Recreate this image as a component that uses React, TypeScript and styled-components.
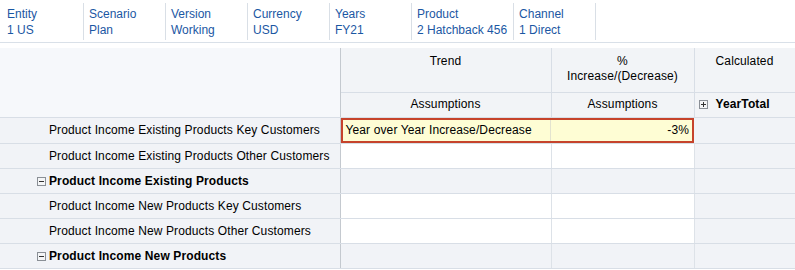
import React from 'react';
import styled, { createGlobalStyle } from 'styled-components';

const GlobalStyle = createGlobalStyle`
  html, body {
    margin: 0;
    padding: 0;
    background: #fff;
    font-family: "Liberation Sans", Arial, sans-serif;
  }
`;

const Page = styled.div`
  width: 795px;
  height: 270px;
  overflow: hidden;
  background: #fff;
`;

const PovBar = styled.div`
  display: flex;
  height: 43px;
  border-bottom: 1px solid #d9e0e8;
  box-sizing: border-box;
  padding: 3px 0 0 2px;
`;

const PovItem = styled.div`
  min-width: 82px;
  box-sizing: border-box;
  padding: 3px 6px 0 5px;
  border-right: 1px solid #d9dfe6;
  color: #1b57a3;
  font-size: 12px;
  line-height: 16px;
  white-space: nowrap;
  height: 37px;
`;

const Grid = styled.table`
  margin-top: 5px;
  width: 795px;
  border-collapse: collapse;
  table-layout: fixed;
  font-size: 12px;
  letter-spacing: 0.12px;
  color: #000;
`;

const Corner = styled.th`
  background: #f6f8fb;
  border-right: 1px solid #c4c9cf;
  border-bottom: 1px solid #d8dee6;
`;

const HeadCell = styled.th<{ $tall?: boolean }>`
  background: #f2f4f7;
  font-weight: normal;
  text-align: center;
  vertical-align: ${p => (p.$tall ? 'top' : 'middle')};
  height: ${p => (p.$tall ? '44px' : '25px')};
  padding: ${p => (p.$tall ? '6px 4px 0' : '0 4px')};
  line-height: 15px;
  border-right: 1px solid #d8dee6;
  border-bottom: 1px solid #d8dee6;
  box-sizing: border-box;
`;

const TotalHead = styled(HeadCell)`
  text-align: left;
  font-weight: bold;
  padding-left: 4px;
`;

const Label = styled.td<{ $bold?: boolean }>`
  background: #f1f3f7;
  height: 24px;
  padding: 0 0 0 ${p => (p.$bold ? '37px' : '49px')};
  font-weight: ${p => (p.$bold ? 'bold' : 'normal')};
  border-right: 1px solid #c4c9cf;
  border-bottom: 1px solid #d8dee6;
  white-space: nowrap;
`;

const Cell = styled.td<{ $shade?: boolean }>`
  background: ${p => (p.$shade ? '#f1f3f7' : '#fff')};
  height: 24px;
  padding: 0 4px;
  border-right: 1px solid #dde2e8;
  border-bottom: 1px solid #d8dee6;
`;

const Toggle = styled.span`
  display: inline-block;
  width: 9px;
  height: 9px;
  box-sizing: border-box;
  border: 1px solid #8a8f96;
  background: #f4f5f7;
  position: relative;
  margin-right: 3px;
  vertical-align: -1px;

  &::before {
    content: '';
    position: absolute;
    left: 1px;
    right: 1px;
    top: 3px;
    height: 1px;
    background: #333;
  }
`;

const PlusToggle = styled(Toggle)`
  margin-right: 8px;
  &::after {
    content: '';
    position: absolute;
    top: 1px;
    bottom: 1px;
    left: 3px;
    width: 1px;
    background: #333;
  }
`;

const HotPair = styled.td`
  padding: 0;
  height: 24px;
  border-bottom: 1px solid #d8dee6;
`;

const HotInner = styled.div`
  display: flex;
  height: 25px;
  box-sizing: border-box;
  border: 2px solid #c6432b;
  background: #fefdd4;
  align-items: center;
`;

const HotText = styled.div<{ $w: number; $right?: boolean }>`
  width: ${p => p.$w}px;
  box-sizing: border-box;
  padding: 0 3px;
  text-align: ${p => (p.$right ? 'right' : 'left')};
  height: 100%;
  line-height: 21px;
  border-right: ${p => (p.$right ? 'none' : '1px solid #e3e3cf')};
`;

const pov = [
  ['Entity', '1 US'],
  ['Scenario', 'Plan'],
  ['Version', 'Working'],
  ['Currency', 'USD'],
  ['Years', 'FY21'],
  ['Product', '2 Hatchback 456'],
  ['Channel', '1 Direct'],
];

const rows: { label: string; bold?: boolean }[] = [
  { label: 'Product Income Existing Products Other Customers' },
  { label: 'Product Income Existing Products', bold: true },
  { label: 'Product Income New Products Key Customers' },
  { label: 'Product Income New Products Other Customers' },
  { label: 'Product Income New Products', bold: true },
];

export default function App() {
  return (
    <Page>
      <GlobalStyle />
      <PovBar>
        {pov.map(([k, v]) => (
          <PovItem key={k}>
            {k}
            <br />
            {v}
          </PovItem>
        ))}
      </PovBar>
      <Grid>
        <colgroup>
          <col style={{ width: 340 }} />
          <col style={{ width: 211 }} />
          <col style={{ width: 143 }} />
          <col style={{ width: 101 }} />
        </colgroup>
        <thead>
          <tr>
            <Corner rowSpan={2} />
            <HeadCell $tall>Trend</HeadCell>
            <HeadCell $tall>
              %
              <br />
              Increase/(Decrease)
            </HeadCell>
            <HeadCell $tall>Calculated</HeadCell>
          </tr>
          <tr>
            <HeadCell>Assumptions</HeadCell>
            <HeadCell>Assumptions</HeadCell>
            <TotalHead>
              <PlusToggle />
              YearTotal
            </TotalHead>
          </tr>
        </thead>
        <tbody>
          <tr>
            <Label>Product Income Existing Products Key Customers</Label>
            <HotPair colSpan={2}>
              <HotInner>
                <HotText $w={209}>Year over Year Increase/Decrease</HotText>
                <HotText $w={142} $right>
                  -3%
                </HotText>
              </HotInner>
            </HotPair>
            <Cell $shade />
          </tr>
          {rows.map(r => (
            <tr key={r.label}>
              <Label $bold={r.bold}>
                {r.bold && <Toggle />}
                {r.label}
              </Label>
              <Cell $shade={r.bold} />
              <Cell $shade={r.bold} />
              <Cell $shade />
            </tr>
          ))}
        </tbody>
      </Grid>
    </Page>
  );
}
